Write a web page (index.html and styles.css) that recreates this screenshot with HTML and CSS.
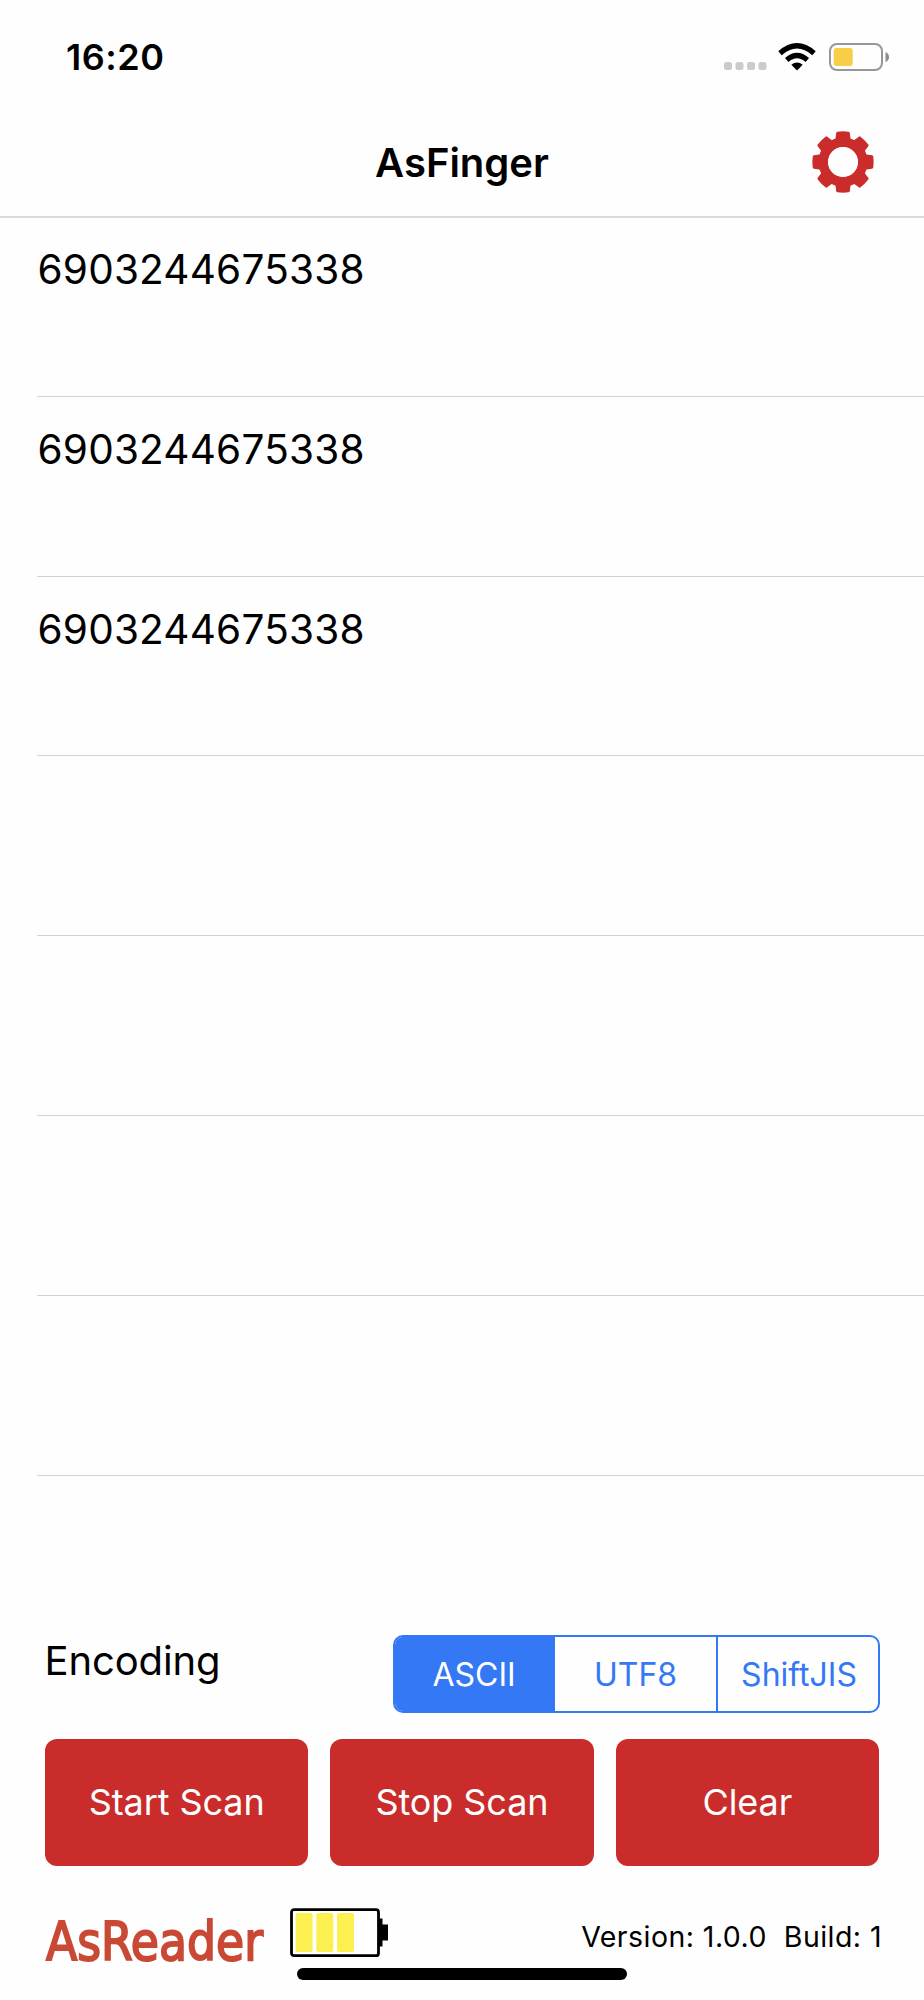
FILE: index.html
```html
<!DOCTYPE html>
<html lang="en">
<head>
<meta charset="utf-8">
<title>AsFinger</title>
<link rel="stylesheet" href="styles.css">
</head>
<body>
<div class="screen">
  <div class="status">
    <span class="time">16:20</span>
    <div class="indicators">
      <svg class="cell" width="43" height="8" viewBox="0 0 43 8" fill="#cbcbcb"><rect width="8" height="8" rx="2.5"/><rect x="11.5" width="8" height="8" rx="2.5"/><rect x="23" width="8" height="8" rx="2.5"/><rect x="34.5" width="8" height="8" rx="2.5"/></svg>
      <svg class="wifi" width="38" height="28" viewBox="0 0 38 28" fill="none" stroke="#000"><path d="M2 10.2Q19-4.6 36 10.2" stroke-width="5.2"/><path d="M8.700 17Q19 8 29.300 17" stroke-width="5.2"/><path d="M13.300 21.800Q19 17.200 24.700 21.800L19 27.500Z" fill="#000" stroke="none"/></svg>
      <svg class="phone-battery" width="61" height="28" viewBox="0 0 61 28"><rect x="1" y="1" width="52" height="26" rx="7" fill="none" stroke="#979797" stroke-width="2"/><rect x="4.700" y="5" width="19" height="18" rx="3" fill="#f7ce46"/><path d="M56.500 9Q60 10.500 60 14T56.500 19Z" fill="#8c8c8c"/></svg>
    </div>
  </div>
  <header class="nav">
    <h1 class="title">AsFinger</h1>
    <svg class="gear" width="62" height="62" viewBox="-31 -31 62 62">
      <defs><path id="tooth" d="M-8-20L-6.800-29Q-6.500-30.200-5.500-30.300Q0-31 5.500-30.300Q6.500-30.200 6.800-29L8-20Z"/></defs>
      <g fill="#c92c2b">
        <use href="#tooth"/><use href="#tooth" transform="rotate(45)"/><use href="#tooth" transform="rotate(90)"/><use href="#tooth" transform="rotate(135)"/><use href="#tooth" transform="rotate(180)"/><use href="#tooth" transform="rotate(225)"/><use href="#tooth" transform="rotate(270)"/><use href="#tooth" transform="rotate(315)"/>
      </g>
      <circle r="19.700" fill="none" stroke="#c92c2b" stroke-width="9.800"/>
      <circle r="15" fill="#fefefe"/>
    </svg>
  </header>
  <ul class="list">
    <li class="row"><span class="code">6903244675338</span></li>
    <li class="row"><span class="code">6903244675338</span></li>
    <li class="row"><span class="code">6903244675338</span></li>
    <li class="row"></li>
    <li class="row"></li>
    <li class="row"></li>
    <li class="row"></li>
  </ul>
  <section class="encoding">
    <span class="label">Encoding</span>
    <div class="segments">
      <span class="segment active">ASCII</span>
      <span class="segment">UTF8</span>
      <span class="segment">ShiftJIS</span>
    </div>
  </section>
  <div class="actions">
    <button class="action">Start Scan</button>
    <button class="action">Stop Scan</button>
    <button class="action">Clear</button>
  </div>
  <footer class="footer">
    <svg class="logo" width="222" height="76" viewBox="0 0 222 76"><text class="logo-text" x="3" y="56" textLength="217" lengthAdjust="spacingAndGlyphs">AsReader</text></svg>
    <svg class="battery" width="98" height="50" viewBox="0 0 98 50">
      <rect x="1.500" y="1.700" width="87" height="46" rx="2.500" fill="#fff" stroke="#000" stroke-width="2.800"/>
      <path d="M89 10.500h3.500v6h5.500v16h-5.500v6H89Z"/>
      <g fill="#fcf050"><rect x="5.600" y="5" width="17" height="39" rx="2"/><rect x="26.300" y="5" width="17" height="39" rx="2"/><rect x="47" y="5" width="17" height="39" rx="2"/></g>
    </svg>
    <span class="version">Version: 1.0.0&nbsp; Build: 1</span>
  </footer>
  <div class="home"></div>
</div>
</body>
</html>
```
FILE: styles.css
```css
* { box-sizing: border-box; }
body { margin: 0; background: #fefefe; color: #000; font-family: Inter, "Liberation Sans", sans-serif; }
.screen { width: 924px; height: 2000px; display: flex; flex-direction: column; overflow: hidden; }
.status { height: 114px; padding: 0 34px 0 66px; display: flex; justify-content: space-between; }
.time { margin-top: 35px; font-size: 36px; line-height: 44px; font-weight: 600; letter-spacing: .5px; }
.indicators { display: flex; padding-top: 43px; }
.cell { margin-top: 19px; }
.wifi { margin-left: 11px; }
.phone-battery { margin-left: 13px; }
.nav { height: 104px; border-bottom: 2px solid #dadada; display: grid; grid-template-columns: 1fr auto 1fr; }
.title { grid-column: 2; margin: 25px 0 0; font-size: 40px; line-height: 48px; font-weight: 600; }
.gear { grid-column: 3; justify-self: end; margin: 17px 50px 0 0; }
.list { list-style: none; margin: -1px 0 0 37px; padding: 0; }
.row { height: 179.8px; border-bottom: 1px solid #d2d2d2; padding-top: 28px; }
.code { display: block; font-size: 40.5px; line-height: 49px; letter-spacing: .2px; padding-left: .5px; }
.encoding { margin-top: auto; height: 104px; padding: 0 44px 0 44.5px; display: flex; justify-content: space-between; flex: none; }
.label { font-size: 40px; line-height: 48px; margin-top: 2px; letter-spacing: -.1px; }
.segments { width: 487px; height: 78px; border: 2px solid #3478f6; border-radius: 10px; display: grid; grid-template-columns: 160px 161px 1fr; overflow: hidden; }
.segment { color: #3478f6; font-size: 32px; display: flex; align-items: center; justify-content: center; padding-top: 1px; }
.segment + .segment + .segment { border-left: 2px solid #3478f6; }
.active { background: #3478f6; color: #fff; padding-right: 2px; }
.segment:last-child { padding-left: 2px; }
.actions { flex: none; height: 127px; padding: 0 45px; display: grid; grid-template-columns: repeat(3, 1fr); gap: 22px; }
.action { border: 0; border-radius: 12px; background: #c92c2b; color: #fff; font-family: inherit; font-size: 36px; padding: 0 0 2px; letter-spacing: -.1px; }
.footer { flex: none; height: 102px; display: flex; padding: 0 42px 0 43px; }
.logo { margin-top: 38px; overflow: visible; }
.logo-text { font-family: "DejaVu Sans", sans-serif; font-size: 53px; fill: #c94935; stroke: #c94935; stroke-width: 2px; }
.battery { margin: 42px 0 0 25px; }
.version { margin: 53px 0 0 auto; font-size: 28.5px; line-height: 36px; letter-spacing: .45px; }
.home { flex: none; width: 330px; height: 12px; border-radius: 6px; background: #000; margin: 0 auto 20px; }
```
